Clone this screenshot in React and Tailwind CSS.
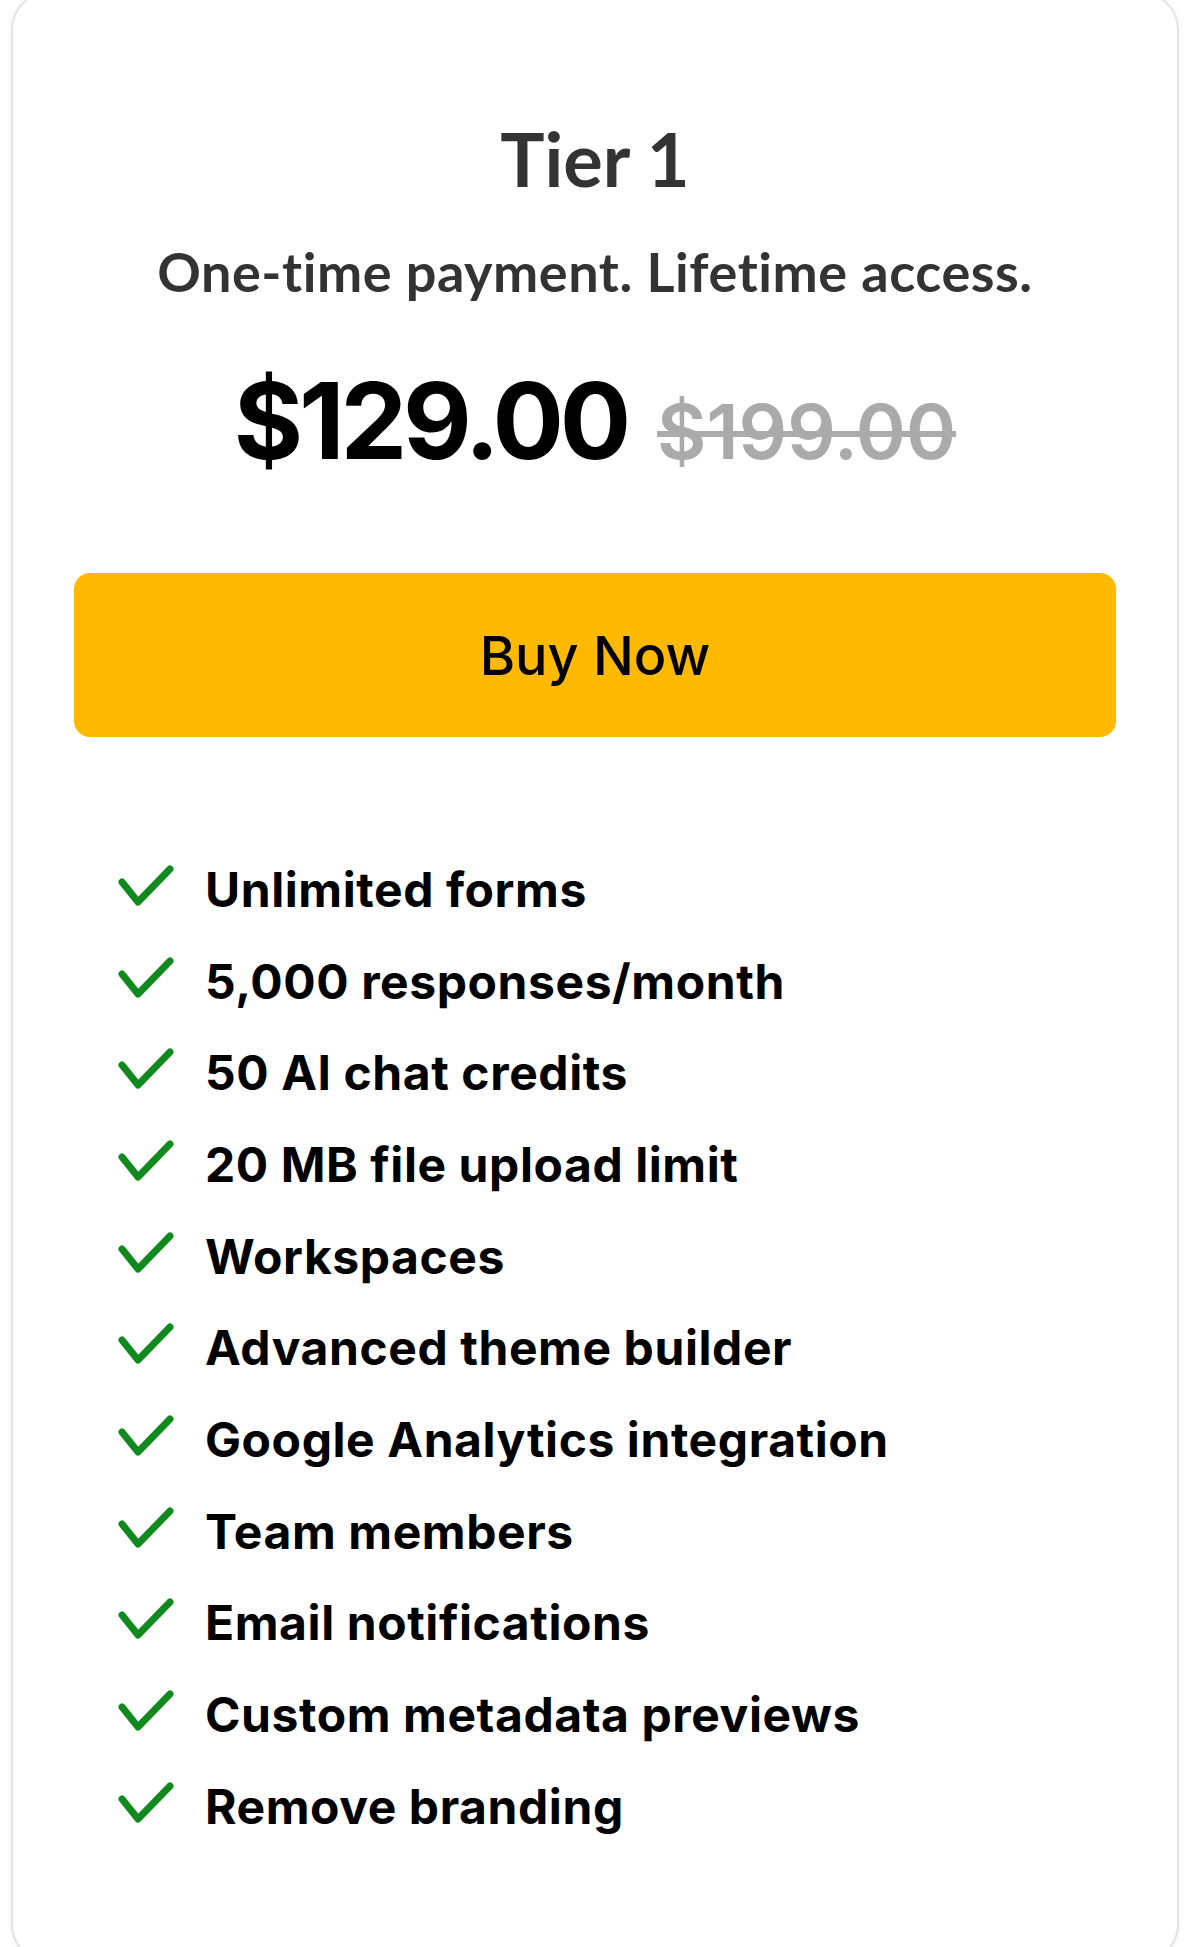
import React from 'react';

const features = [
  'Unlimited forms',
  '5,000 responses/month',
  '50 AI chat credits',
  '20 MB file upload limit',
  'Workspaces',
  'Advanced theme builder',
  'Google Analytics integration',
  'Team members',
  'Email notifications',
  'Custom metadata previews',
  'Remove branding',
];

const Check = () => (
  <svg width="56" height="42" viewBox="0 0 56 42" fill="none" className="shrink-0 mb-[8px]">
    <polyline
      points="4,17 20,37 52,4"
      stroke="#108a1c"
      strokeWidth="7"
      strokeLinecap="round"
      strokeLinejoin="round"
    />
  </svg>
);

const App = () => {
  return (
    <div className="w-[1200px] h-[1947px] overflow-hidden bg-white">
      <div className="ml-[11px] mr-[21px] -mt-[9px] h-[1972px] rounded-[39px] border-2 border-[#e3e3e3] bg-white shadow-[0_0_6px_rgba(0,0,0,0.06)] pt-[129px]">
        <h2 className="text-center font-['Lato',sans-serif] font-bold text-[74px] leading-[74px] text-[#333333]">
          Tier 1
        </h2>
        <p className="mt-[49px] text-center font-['Lato',sans-serif] font-bold text-[54px] leading-[54px] tracking-[0.01em] text-[#333333] [font-variant-ligatures:none]">
          One-time payment. Lifetime access.
        </p>

        <div className="mt-[69px] flex items-baseline justify-center gap-[30px] font-['Inter',sans-serif]">
          <span className="font-bold text-[106px] leading-[106px] tracking-[-0.04em] text-black">$129.00</span>
          <span className="font-semibold text-[76px] leading-[76px] text-[#aaaaaa] line-through decoration-[6px]">
            $199.00
          </span>
        </div>

        <div className="mt-[99px] px-[61px]">
          <button className="w-full h-[164px] rounded-[16px] bg-[#ffba00] font-['Inter',sans-serif] font-medium text-[54px] text-black">
            Buy Now
          </button>
        </div>

        <ul className="mt-[107px] pl-[105px] font-['Inter',sans-serif]">
          {features.map((f) => (
            <li key={f} className="flex items-center gap-[31px] h-[91.7px]">
              <Check />
              <span className="font-bold text-[48px] leading-none tracking-[0.012em] text-black">{f}</span>
            </li>
          ))}
        </ul>
      </div>
    </div>
  );
};

export default App;
